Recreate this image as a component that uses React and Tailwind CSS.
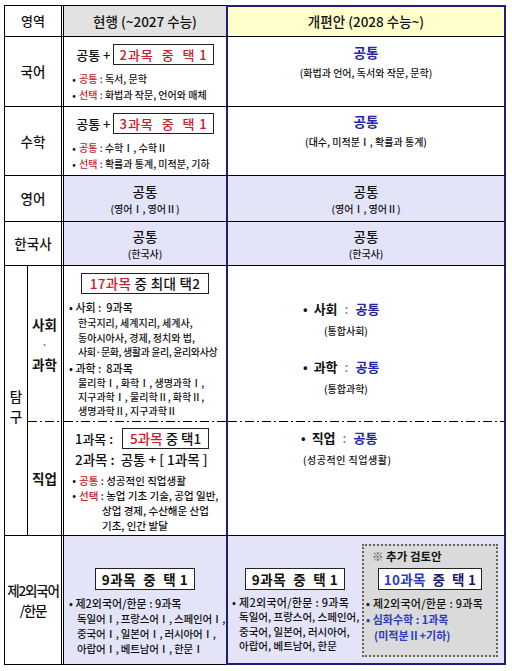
import React from "react";

const NAVY = "border-x-[#1f1f7a]";

function Box({ children, className = "" }) {
  return (
    <span className={`inline-flex items-center justify-center border border-[#222] bg-white ${className}`}>
      {children}
    </span>
  );
}

function Dash() {
  return (
    <div className="mt-auto h-px w-full bg-[image:repeating-linear-gradient(90deg,#000_0_9px,transparent_9px_12px,#000_12px_14px,transparent_14px_17px)]" />
  );
}

function Item({ label, children }) {
  return (
    <div className="flex">
      <span className="w-[10px] shrink-0 text-center">•</span>
      <span className="whitespace-nowrap">
        <span className="text-[#c8202a]">{label}</span>
        <span className="text-[#333]"> : </span>
        {children}
      </span>
    </div>
  );
}

function Pick({ label }) {
  return (
    <div className="text-[13px] leading-[20px]">
      <span className="mr-[6px]">•</span>
      <span className="font-bold">{label}</span>
      <span className="mx-[7px] text-[#888]">:</span>
      <span className="font-bold text-[#2626a0]">공통</span>
    </div>
  );
}

export default function App() {
  return (
    <div className="w-[512px] h-[671px] bg-white pt-[5px] pl-[4px] font-['Noto_Sans_CJK_KR',sans-serif] font-medium text-[#111]">
      <div className="grid grid-cols-[24px_36px_162px_280px] grid-rows-[32px_70px_69px_46px_44px_156px_114px_129px]">
        {/* header */}
        <div className="col-span-2 flex items-center justify-center border-t border-l border-b border-black border-r-[3px] border-double text-[13px]">
          영역
        </div>
        <div className="flex items-center justify-center border-t border-b border-black bg-[#e2e2e2] text-[13.5px]">
          현행 (~2027 수능)
        </div>
        <div className={`flex items-center justify-center border-t-2 border-x-2 border-b border-t-[#1f1f7a] ${NAVY} border-b-black bg-[#ffffcc] text-[13.5px]`}>
          개편안 (2028 수능~)
        </div>

        {/* 국어 */}
        <div className="col-span-2 flex items-center justify-center border-l border-b border-black border-r-[3px] border-double text-[13.5px]">
          국어
        </div>
        <div className="flex flex-col border-b border-black pt-[7px] text-[10px] leading-[16px]">
          <div className="flex items-center justify-center gap-[3px] text-[13px]">
            <span>공통 +</span>
            <Box className="h-[21px] px-[5px] text-[#c8202a] tracking-[1px]">2과목&nbsp; 중&nbsp; 택 1</Box>
          </div>
          <div className="mt-[6px] pl-[5px]">
            <Item label="공통">독서, 문학</Item>
            <Item label="선택">화법과 작문, 언어와 매체</Item>
          </div>
        </div>
        <div className={`flex flex-col items-center border-x-2 border-b ${NAVY} border-b-black pt-[5px]`}>
          <div className="text-[13.5px] font-bold leading-[20px] text-[#2626a0]">공통</div>
          <div className="mt-[3px] text-[10px] leading-[16px]">(화법과 언어, 독서와 작문, 문학)</div>
        </div>

        {/* 수학 */}
        <div className="col-span-2 flex items-center justify-center border-l border-b border-black border-r-[3px] border-double text-[13.5px]">
          수학
        </div>
        <div className="flex flex-col border-b border-black pt-[6px] text-[10px] leading-[16px]">
          <div className="flex items-center justify-center gap-[3px] text-[13px]">
            <span>공통 +</span>
            <Box className="h-[21px] px-[5px] text-[#c8202a] tracking-[1px]">3과목&nbsp; 중&nbsp; 택 1</Box>
          </div>
          <div className="mt-[6px] pl-[5px]">
            <Item label="공통">수학Ⅰ, 수학Ⅱ</Item>
            <Item label="선택">확률과 통계, 미적분, 기하</Item>
          </div>
        </div>
        <div className={`flex flex-col items-center border-x-2 border-b ${NAVY} border-b-black pt-[4px]`}>
          <div className="text-[13.5px] font-bold leading-[20px] text-[#2626a0]">공통</div>
          <div className="mt-[3px] text-[10px] leading-[16px]">(대수, 미적분Ⅰ, 확률과 통계)</div>
        </div>

        {/* 영어 */}
        <div className="col-span-2 flex items-center justify-center border-l border-b border-black border-r-[3px] border-double text-[13.5px]">
          영어
        </div>
        <div className="flex flex-col items-center justify-center border-b border-black bg-[#e4e4f8]">
          <div className="text-[13.5px] leading-[19px]">공통</div>
          <div className="text-[10px] leading-[15px]">(영어Ⅰ, 영어Ⅱ)</div>
        </div>
        <div className={`flex flex-col items-center justify-center border-x-2 border-b ${NAVY} border-b-black bg-[#e4e4f8]`}>
          <div className="text-[13.5px] leading-[19px]">공통</div>
          <div className="text-[10px] leading-[15px]">(영어Ⅰ, 영어Ⅱ)</div>
        </div>

        {/* 한국사 */}
        <div className="col-span-2 flex items-center justify-center border-l border-b border-black border-r-[3px] border-double text-[13.5px]">
          한국사
        </div>
        <div className="flex flex-col items-center justify-center border-b border-black bg-[#e4e4f8]">
          <div className="text-[13.5px] leading-[19px]">공통</div>
          <div className="text-[10px] leading-[15px]">(한국사)</div>
        </div>
        <div className={`flex flex-col items-center justify-center border-x-2 border-b ${NAVY} border-b-black bg-[#e4e4f8]`}>
          <div className="text-[13.5px] leading-[19px]">공통</div>
          <div className="text-[10px] leading-[15px]">(한국사)</div>
        </div>

        {/* 탐구 */}
        <div className="row-span-2 flex flex-col items-center justify-center border-l border-r border-b border-black pt-[10px] text-[13.5px] leading-[20px]">
          <span>탐</span>
          <span>구</span>
        </div>
        <div className="flex flex-col border-r-[3px] border-double border-black">
          <div className="flex flex-1 flex-col items-center justify-center text-[13.5px] font-bold leading-[20px]">
            <span>사회</span>
            <span className="font-normal text-[#777]">·</span>
            <span>과학</span>
          </div>
          <Dash />
        </div>
        <div className="flex flex-col pt-[7px]">
          <div className="flex justify-center">
            <Box className="h-[21px] px-[8px] text-[13.5px] tracking-[0.3px]">
              <span className="text-[#c8202a]">17과목</span>&nbsp;중 최대 택2
            </Box>
          </div>
          <div className="mt-[5px] pl-[5px] text-[11px] leading-[17px]">• 사회 :&nbsp; 9과목</div>
          <div className="whitespace-nowrap pl-[14px] text-[10px] leading-[14.5px]">
            <div>한국지리, 세계지리, 세계사,</div>
            <div>동아시아사, 경제, 정치와 법,</div>
            <div className="tracking-[-0.4px]">사회·문화, 생활과 윤리, 윤리와사상</div>
          </div>
          <div className="pl-[5px] text-[11px] leading-[16px]">• 과학 :&nbsp; 8과목</div>
          <div className="whitespace-nowrap pl-[14px] text-[10px] leading-[14px]">
            <div>물리학Ⅰ, 화학Ⅰ, 생명과학Ⅰ,</div>
            <div>지구과학Ⅰ, 물리학Ⅱ, 화학Ⅱ,</div>
            <div>생명과학Ⅱ, 지구과학Ⅱ</div>
          </div>
          <Dash />
        </div>
        <div className={`flex flex-col border-x-2 ${NAVY}`}>
          <div className="flex flex-col pl-[75px] pt-[33px]">
            <Pick label="사회" />
            <div className="mt-[4px] pl-[21px] text-[10px] leading-[16px]">(통합사회)</div>
            <div className="mt-[18px]">
              <Pick label="과학" />
            </div>
            <div className="mt-[4px] pl-[21px] text-[10px] leading-[16px]">(통합과학)</div>
          </div>
          <Dash />
        </div>

        {/* 직업 */}
        <div className="flex items-center justify-center border-b border-black border-r-[3px] border-double text-[13.5px] font-bold">
          직업
        </div>
        <div className="flex flex-col border-b border-black pt-[6px]">
          <div className="flex items-center pl-[11px] text-[13px] leading-[21px]">
            <span>1과목 :&nbsp;</span>
            <Box className="ml-[6px] h-[21px] px-[7px] text-[13.5px]">
              <span className="text-[#c8202a]">5과목</span>&nbsp;중 택1
            </Box>
          </div>
          <div className="pl-[11px] text-[13.5px] leading-[21px]">2과목 :&nbsp; 공통 + [ 1과목 ]</div>
          <div className="mt-[3px] pl-[5px] text-[10.5px] leading-[15px]">
            <Item label="공통">성공적인 직업생활</Item>
            <Item label="선택">농업 기초 기술, 공업 일반,</Item>
            <div className="pl-[33px]">상업 경제, 수산해운 산업</div>
            <div className="pl-[33px]">기초, 인간 발달</div>
          </div>
        </div>
        <div className={`flex flex-col border-x-2 border-b ${NAVY} border-b-black pl-[73px] pt-[6px]`}>
          <Pick label="직업" />
          <div className="mt-[4px] pl-[2px] text-[10px] leading-[16px] tracking-[0.5px]">(성공적인 직업생활)</div>
        </div>

        {/* 제2외국어 */}
        <div className="col-span-2 flex flex-col items-center justify-center border-l border-b border-black border-r-[3px] border-double text-[13.5px] leading-[20px] tracking-[-1.2px]">
          <span>제2외국어</span>
          <span>/한문</span>
        </div>
        <div className="flex flex-col border-b border-black bg-[#e4e4f8] pt-[32px]">
          <div className="flex justify-center">
            <Box className="h-[22px] px-[6px] text-[13.5px] font-bold tracking-[0.5px]">9과목&nbsp; 중&nbsp; 택 1</Box>
          </div>
          <div className="mt-[5px] whitespace-nowrap pl-[5px] text-[11px] leading-[16px]">• 제2외국어/한문 : 9과목</div>
          <div className="whitespace-nowrap pl-[13px] text-[10.5px] leading-[15px] tracking-[-0.2px]">
            <div>독일어Ⅰ, 프랑스어Ⅰ, 스페인어Ⅰ,</div>
            <div>중국어Ⅰ, 일본어Ⅰ, 러시아어Ⅰ,</div>
            <div>아랍어Ⅰ, 베트남어Ⅰ, 한문Ⅰ</div>
          </div>
        </div>
        <div className="flex border-x-2 border-b-2 border-[#1f1f7a] bg-[#e4e4f8]">
          <div className="flex w-[134px] flex-col pt-[32px]">
            <div className="flex justify-center">
              <Box className="h-[22px] px-[6px] text-[13.5px] font-bold tracking-[0.5px]">9과목&nbsp; 중&nbsp; 택 1</Box>
            </div>
            <div className="mt-[4px] whitespace-nowrap pl-[4px] text-[11px] leading-[16px] tracking-[0.3px]">• 제2외국어/한문 : 9과목</div>
            <div className="whitespace-nowrap pl-[11px] text-[10.5px] leading-[14.5px]">
              <div>독일어, 프랑스어, 스페인어,</div>
              <div>중국어, 일본어, 러시아어,</div>
              <div>아랍어, 베트남어, 한문</div>
            </div>
          </div>
          <div className="mb-[6px] mt-[8px] flex w-[136px] flex-col border-2 border-dotted border-[#666] bg-[#dadada] pt-[2px]">
            <div className="pl-[8px] text-[11.5px] font-bold leading-[16px]">
              <span className="font-normal text-[#555]">※</span> 추가 검토안
            </div>
            <div className="mt-[4px] flex justify-center">
              <Box className="h-[22px] px-[5px] text-[13.5px] font-bold tracking-[0.3px] text-[#1a1a70]">
                <span className="text-[#2a3cc0]">10과목</span>&nbsp; 중&nbsp; 택 1
              </Box>
            </div>
            <div className="mt-[5px] whitespace-nowrap pl-[2px] text-[11px] leading-[16px] tracking-[0.3px]">• 제2외국어/한문 : 9과목</div>
            <div className="pl-[2px] text-[11px] font-bold leading-[16px] text-[#2a3cc0]">• 심화수학 : 1과목</div>
            <div className="pl-[10px] text-[11px] font-bold leading-[16px] text-[#2a3cc0]">(미적분Ⅱ+기하)</div>
          </div>
        </div>
      </div>
    </div>
  );
}
